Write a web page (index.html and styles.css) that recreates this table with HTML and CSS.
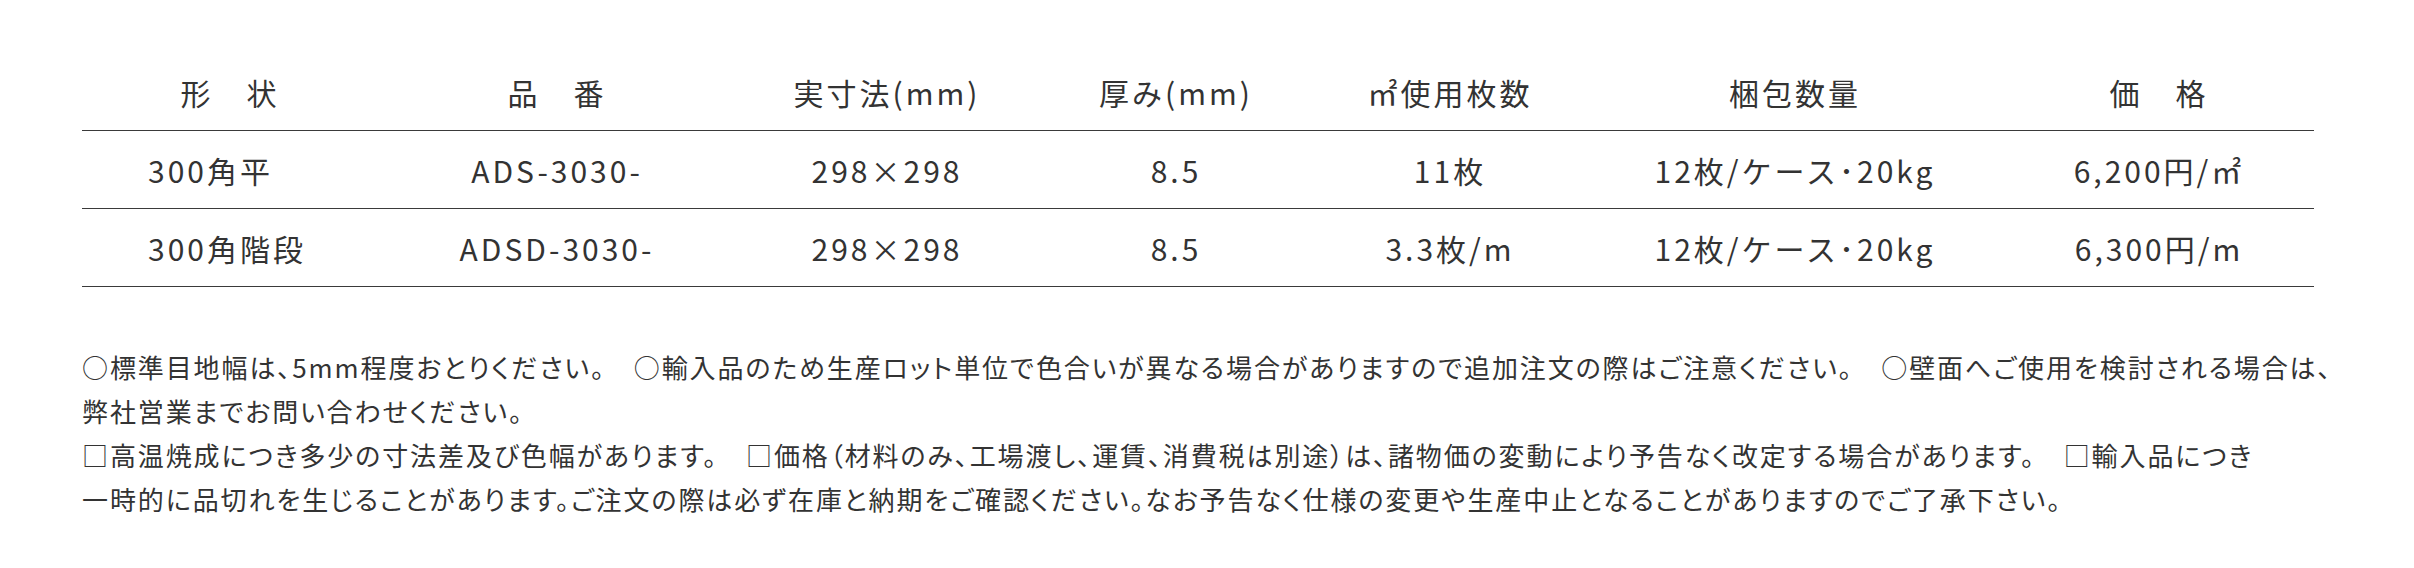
FILE: index.html
```html
<!DOCTYPE html>
<html lang="ja">
<head>
<meta charset="utf-8">
<title>価格表</title>
<link rel="stylesheet" href="styles.css">
</head>
<body>
<div class="page">
  <table class="spec">
    <colgroup>
      <col class="c-shape">
      <col class="c-code">
      <col class="c-size">
      <col class="c-thick">
      <col class="c-use">
      <col class="c-pack">
      <col class="c-price">
    </colgroup>
    <thead>
      <tr>
        <th>形　状</th>
        <th>品　番</th>
        <th>実寸法(mm)</th>
        <th>厚み(mm)</th>
        <th>㎡使用枚数</th>
        <th>梱包数量</th>
        <th>価　格</th>
      </tr>
    </thead>
    <tbody>
      <tr>
        <td class="left">300角平</td>
        <td>ADS-3030-</td>
        <td>298×298</td>
        <td>8.5</td>
        <td>11枚</td>
        <td>12枚/ケース･20kg</td>
        <td>6,200円/㎡</td>
      </tr>
      <tr>
        <td class="left">300角階段</td>
        <td>ADSD-3030-</td>
        <td>298×298</td>
        <td>8.5</td>
        <td>3.3枚/m</td>
        <td>12枚/ケース･20kg</td>
        <td>6,300円/m</td>
      </tr>
    </tbody>
  </table>

  <div class="notes">
    <p>○標準目地幅は、5mm程度おとりください。　○輸入品のため生産ロット単位で色合いが異なる場合がありますので追加注文の際はご注意ください。　○壁面へご使用を検討される場合は、<br>弊社営業までお問い合わせください。</p>
    <p>□高温焼成につき多少の寸法差及び色幅があります。　□価格（材料のみ、工場渡し、運賃、消費税は別途）は、諸物価の変動により予告なく改定する場合があります。　□輸入品につき<br>一時的に品切れを生じることがあります。ご注文の際は必ず在庫と納期をご確認ください。なお予告なく仕様の変更や生産中止となることがありますのでご了承下さい。</p>
  </div>
</div>
</body>
</html>
```

FILE: styles.css
```css
html, body {
  margin: 0;
  padding: 0;
  background: #ffffff;
}

body {
  font-family: "Noto Sans CJK JP", "Noto Sans", sans-serif;
  color: #333333;
}

.page {
  padding: 53px 0 0 82px;
  width: 2232px;
}

.spec {
  width: 2232px;
  border-collapse: collapse;
  table-layout: fixed;
}

.c-shape { width: 296px; }
.c-code  { width: 358px; }
.c-size  { width: 302px; }
.c-thick { width: 276px; }
.c-use   { width: 272px; }
.c-pack  { width: 418px; }
.c-price { width: 310px; }

.spec th,
.spec td {
  height: 77px;
  padding: 0;
  font-size: 30px;
  font-weight: 400;
  letter-spacing: 3px;
  text-align: center;
  vertical-align: middle;
  white-space: nowrap;
  border-bottom: 1px solid #3a3a3a;
  line-height: 1;
}

.spec td.left {
  text-align: left;
  padding-left: 66px;
}

.notes {
  margin-top: 58px;
  font-size: 26px;
  letter-spacing: 1.9px;
  font-feature-settings: "palt";
  line-height: 44px;
  white-space: nowrap;
}

.notes p {
  margin: 0;
}
```
